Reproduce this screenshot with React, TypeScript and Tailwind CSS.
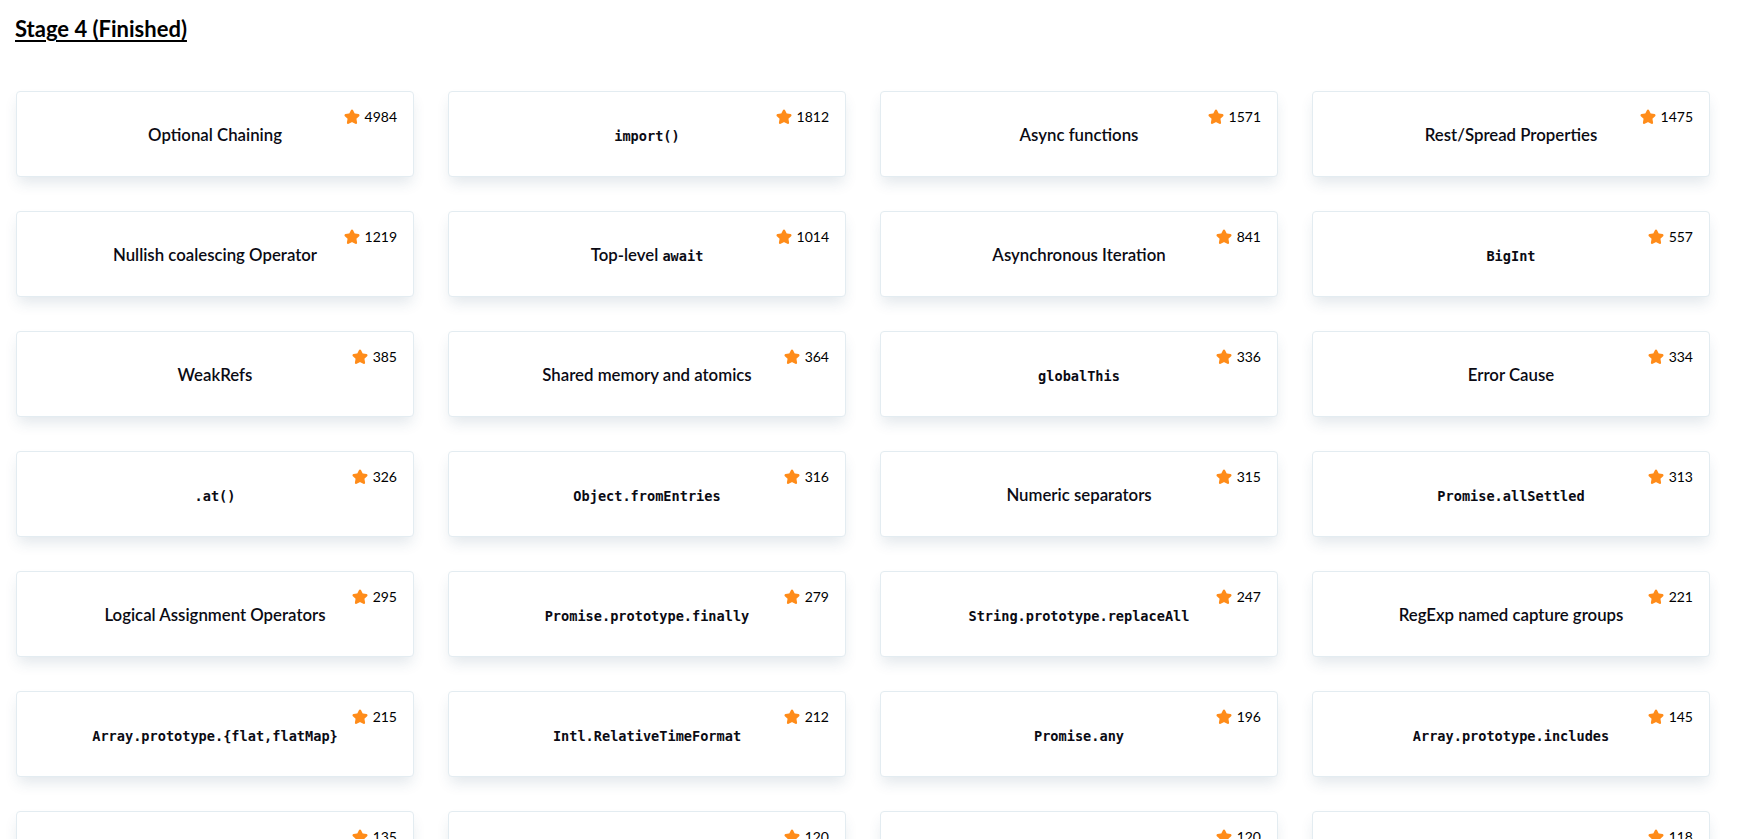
import { Star } from "lucide-react"

type Proposal = { title: React.ReactNode; stars: number }

const Code = ({ children }: { children: React.ReactNode }) => (
  <code className="font-['DejaVu_Sans_Mono',monospace] text-[13.6px] font-bold">{children}</code>
)

const proposals: Proposal[] = [
  { title: "Optional Chaining", stars: 4984 },
  { title: <Code>import()</Code>, stars: 1812 },
  { title: "Async functions", stars: 1571 },
  { title: "Rest/Spread Properties", stars: 1475 },
  { title: "Nullish coalescing Operator", stars: 1219 },
  { title: <>Top-level <Code>await</Code></>, stars: 1014 },
  { title: "Asynchronous Iteration", stars: 841 },
  { title: <Code>BigInt</Code>, stars: 557 },
  { title: "WeakRefs", stars: 385 },
  { title: "Shared memory and atomics", stars: 364 },
  { title: <Code>globalThis</Code>, stars: 336 },
  { title: "Error Cause", stars: 334 },
  { title: <Code>.at()</Code>, stars: 326 },
  { title: <Code>Object.fromEntries</Code>, stars: 316 },
  { title: "Numeric separators", stars: 315 },
  { title: <Code>Promise.allSettled</Code>, stars: 313 },
  { title: "Logical Assignment Operators", stars: 295 },
  { title: <Code>Promise.prototype.finally</Code>, stars: 279 },
  { title: <Code>String.prototype.replaceAll</Code>, stars: 247 },
  { title: "RegExp named capture groups", stars: 221 },
  { title: <Code>Array.prototype.{"{"}flat,flatMap{"}"}</Code>, stars: 215 },
  { title: <Code>Intl.RelativeTimeFormat</Code>, stars: 212 },
  { title: <Code>Promise.any</Code>, stars: 196 },
  { title: <Code>Array.prototype.includes</Code>, stars: 145 },
  { title: "Class Fields", stars: 135 },
  { title: <Code>Object.hasOwn</Code>, stars: 120 },
  { title: "Exponentiation operator", stars: 120 },
  { title: "Hashbang Grammar", stars: 118 },
]

const Card = ({ p }: { p: Proposal }) => (
  <div className="relative flex h-[86px] items-center justify-center rounded-[4px] border border-[#e3ecf1] bg-white shadow-[0_8px_14px_-2px_rgba(40,80,110,0.13)]">
    {/* estrellas */}
    <div className="absolute right-[16px] top-[16px] flex items-center gap-[5px] text-[14px] leading-[18px] text-black">
      <Star size={16} strokeWidth={2.5} className="fill-[#ff8c1a] text-[#ff8c1a]" />
      <span>{p.stars}</span>
    </div>
    <h3 className="mt-[2px] text-[16.8px] font-semibold text-[#0b0b14]">{p.title}</h3>
  </div>
)

const App = () => {
  return (
    <div className="min-h-screen bg-white px-[16px] pt-[15px] font-['Lato',sans-serif]">
      <h2 className="ml-[-1px] text-[22px] font-bold leading-[28px] text-black underline underline-offset-[3px]">
        Stage 4 (Finished)
      </h2>
      <div className="mt-[48px] grid grid-cols-[repeat(4,398px)] gap-[34px] pb-10">
        {proposals.map((p, i) => (
          <Card key={i} p={p} />
        ))}
      </div>
    </div>
  )
}

export default App
